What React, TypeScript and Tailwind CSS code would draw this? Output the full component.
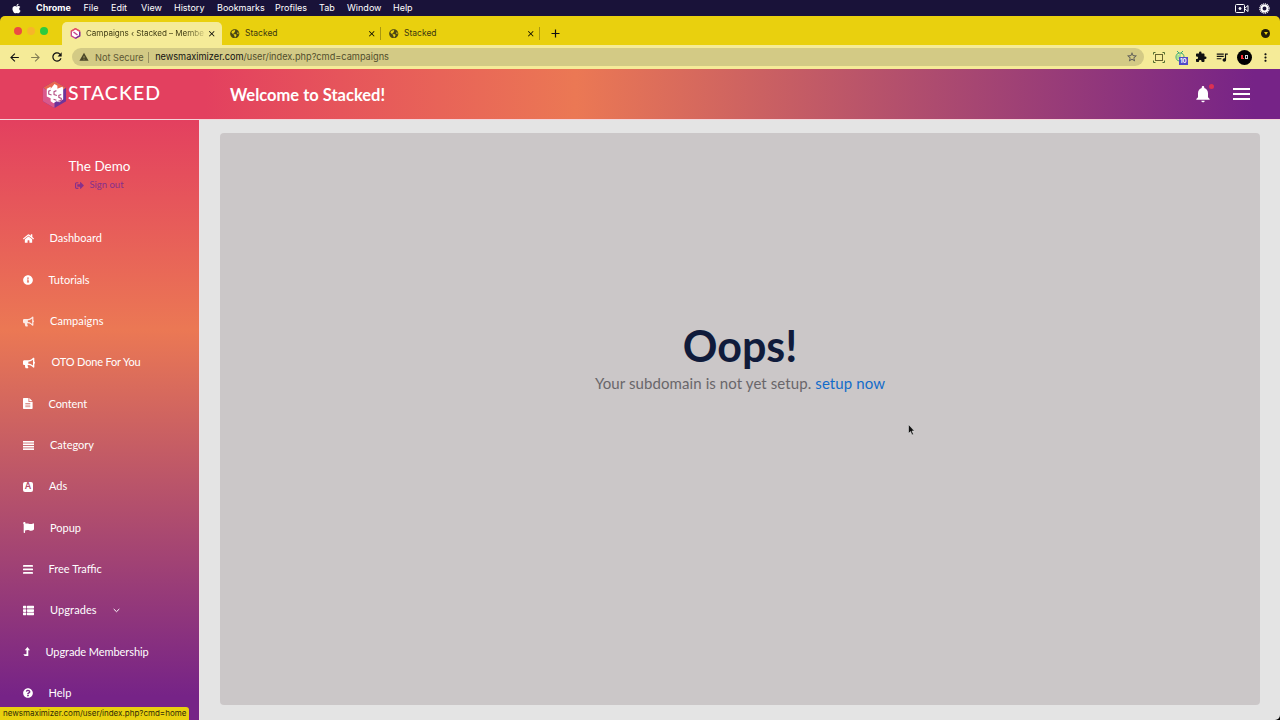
import React from 'react';
import {
  FaApple,
  FaBullhorn,
  FaFlag,
  FaGlobeAmericas,
  FaHome,
  FaInfoCircle,
  FaQuestionCircle,
  FaSignOutAlt,
  FaThList,
} from 'react-icons/fa';
import {
  MdArrowBack,
  MdArrowForward,
  MdClose,
  MdExtension,
  MdMoreVert,
  MdNotifications,
  MdQueueMusic,
  MdRefresh,
  MdStarBorder,
  MdWarning,
} from 'react-icons/md';

const macMenu = [
  { label: 'Chrome', width: 'w-[47.5px] font-bold' },
  { label: 'File', width: 'w-[27.5px]' },
  { label: 'Edit', width: 'w-[30px]' },
  { label: 'View', width: 'w-[33px]' },
  { label: 'History', width: 'w-[43px]' },
  { label: 'Bookmarks', width: 'w-[58px]' },
  { label: 'Profiles', width: 'w-[44px]' },
  { label: 'Tab', width: 'w-[28px]' },
  { label: 'Window', width: 'w-[46px]' },
  { label: 'Help', width: 'w-[30px]' },
];

function BarsIcon() {
  return (
    <svg width="10" height="9" viewBox="0 0 10 9" fill="currentColor">
      <rect width="10" height="1.8" rx=".4" />
      <rect y="3.5" width="10" height="1.8" rx=".4" />
      <rect y="7" width="10" height="1.8" rx=".4" />
    </svg>
  );
}

function JustifyIcon() {
  return (
    <svg width="11" height="9" viewBox="0 0 11 9" fill="currentColor">
      <rect width="11" height="1.6" />
      <rect y="2.45" width="11" height="1.6" />
      <rect y="4.9" width="11" height="1.6" />
      <rect y="7.35" width="11" height="1.6" />
    </svg>
  );
}

function FileIcon() {
  return (
    <svg width="10" height="11" viewBox="0 0 10 11">
      <path d="M.7 0H5.500V4H9.600V10.300Q9.600 11 8.900 11H.7Q0 11 0 10.300V.7Q0 0 .7 0Z" fill="currentColor" />
      <path d="M6.300 0L9.600 3.300H6.300Z" fill="currentColor" />
      <path d="M2.300 5.500h5M2.300 7.100h5M2.300 8.700h5" stroke="#cc6a62" strokeWidth=".7" />
    </svg>
  );
}

function LevelUpIcon() {
  return (
    <svg width="10" height="10" viewBox="0 0 10 10" className="shrink-0">
      <path d="M4.400 0L7 3.300H5.300V8.900H1.700L.3 7.300H3.500V3.300H1.800Z" fill="currentColor" />
    </svg>
  );
}

function AdIcon() {
  return (
    <span className="flex size-[10px] items-center justify-center rounded-[2px] bg-white text-[8.5px] leading-none font-black text-[#b64e6b]">A</span>
  );
}

const navItems = [
  { label: 'Dashboard', icon: <FaHome size={11} />, text: 'ml-[15.5px]' },
  { label: 'Tutorials', icon: <FaInfoCircle size={10} />, text: 'ml-[15.5px]' },
  { label: 'Campaigns', icon: <FaBullhorn size={11} className="opacity-85" />, text: 'ml-[16px] tracking-[.08px]' },
  { label: 'OTO Done For You', icon: <FaBullhorn size={12} />, text: 'ml-[16.5px] tracking-[-.17px]' },
  { label: 'Content', icon: <FileIcon />, text: 'ml-[15.5px] tracking-[-.1px]' },
  { label: 'Category', icon: <JustifyIcon />, text: 'ml-[16px]' },
  { label: 'Ads', icon: <AdIcon />, text: 'ml-[16px]' },
  { label: 'Popup', icon: <FaFlag size={11} />, text: 'ml-[16px]' },
  { label: 'Free Traffic', icon: <BarsIcon />, text: 'ml-[15.5px]' },
  { label: 'Upgrades', icon: <FaThList size={11} />, text: 'ml-[16px] tracking-[.1px]', arrow: true },
  { label: 'Upgrade Membership', icon: <LevelUpIcon />, text: 'ml-[12.5px] tracking-[-.08px]' },
  { label: 'Help', icon: <FaQuestionCircle size={10} />, text: 'ml-[15.5px]' },
];

function CubeIcon({ size }: { size: number }) {
  return (
    <svg width={size} height={size} viewBox="0 0 26 28" className="shrink-0">
      <path d="M13 0L25 7V21L13 28L1 21V7Z" fill="#6f3499" />
      <path d="M13 0L25 7L13 14L1 7Z" fill="#e8654f" />
      <path d="M1 7L13 14V28L1 21Z" fill="#d9588c" />
      <path d="M5 8l4-2v2l4-5 3 2v3l5-2 1 1v12l-4 3-3-1-3 2-3-2v-3l-4-2z" fill="#fff" />
      <path d="M9 9.500L7 10.500v3l3 1M15 10l-2.500 1v3l3 1M20 14l-2.500 1v2l2.500 1v2l-3 1M12 19l3 1" fill="none" stroke="#b65387" strokeWidth="1.200" />
    </svg>
  );
}

function TabIcon() {
  return (
    <svg width="11" height="11" viewBox="0 0 11 11" fill="none" className="shrink-0">
      <path d="M5.500 .7L9.700 3.100V7.900L5.500 10.300L1.300 7.900V3.100Z" fill="#fff" stroke="#c9428a" strokeWidth="1.300" />
      <path d="M1.300 3.100L5.500 .7L9.700 3.100" stroke="#e8545c" strokeWidth="1.300" />
      <path d="M9.700 4V7.900L5.500 10.300" stroke="#74339c" strokeWidth="1.300" />
      <path d="M3.500 4l4 3" stroke="#c9428a" strokeWidth="1.500" />
    </svg>
  );
}

function MenuBar() {
  return (
    <div className="flex h-4 items-center bg-[#191239] text-[9px] text-white">
      <FaApple size={11} className="ml-[11px] mr-[14px]" />
      {macMenu.map((item) => (
        <span key={item.label} className={`${item.width} whitespace-nowrap`}>{item.label}</span>
      ))}
      <div className="ml-auto mr-[10px] flex items-center gap-[10px]">
        <svg width="14" height="9" viewBox="0 0 14 9" fill="none" stroke="#fff">
          <rect x=".5" y=".5" width="9" height="8" rx="1" />
          <path d="M10 4l3-2.500v6L10 5" />
          <circle cx="5" cy="4.500" r="1" fill="#fff" />
        </svg>
        <svg width="11" height="11" viewBox="0 0 11 11" fill="none" stroke="#fff">
          <circle cx="5.500" cy="5.500" r="4.600" strokeWidth="1.400" strokeDasharray="1 .8" />
          <circle cx="5.500" cy="5.500" r="3" strokeWidth="2" />
        </svg>
      </div>
    </div>
  );
}

function InactiveTab() {
  return (
    <div className="flex h-full w-[159px] items-center border-r border-[#a8970f] pl-[8px] pr-[4px]">
      <FaGlobeAmericas size={9.5} className="mr-[5.500px] text-[#4b4716]" />
      <span>Stacked</span>
      <MdClose size={9.5} className="ml-auto text-black" />
    </div>
  );
}

function BrowserTabs() {
  return (
    <div className="bg-[#191239]">
      <div className="flex h-[29px] rounded-t-[5px] bg-[#e9d00e] text-[8.500px] text-[#3b3710]">
        <div className="flex w-[62px] gap-[5px] pl-[14px] pt-[11px]">
          <span className="size-2 rounded-full bg-[#ec4b43]" />
          <span className="size-2 rounded-full bg-[#f7b529]" />
          <span className="size-2 rounded-full bg-[#2dcb3e]" />
        </div>
        <div className="mt-[6px] flex h-[23px] w-[160px] items-center rounded-t-[5px] bg-[#f5eb98] pl-[8px] pr-[6px]">
          <TabIcon />
          <span className="ml-[5px] bg-gradient-to-r from-[#3b3710] from-85% to-[#3b3710]/20 bg-clip-text text-[8.100px] tracking-[-.05px] whitespace-nowrap text-transparent">
            Campaigns ‹ Stacked – Membe
          </span>
          <MdClose size={9.5} className="ml-auto shrink-0 text-black" />
        </div>
        <div className="mt-[11px] flex h-[13px]">
          <InactiveTab />
          <InactiveTab />
          <svg width="9" height="9" viewBox="0 0 9 9" className="ml-[11px] mt-[2px]" stroke="#111" strokeWidth="1.200">
            <path d="M4.500 .5v8M.5 4.500h8" />
          </svg>
        </div>
        <span className="ml-auto mr-[10px] mt-[13px] flex size-[9px] items-center justify-center rounded-full bg-[#211d08]">
          <span className="border-x-2 border-t-[3px] border-x-transparent border-t-[#e9d00e]" />
        </span>
      </div>
    </div>
  );
}

function Toolbar() {
  return (
    <div className="flex h-6 items-center bg-[#f5eb98] pl-[8px] pr-[8px] text-[#111]">
      <MdArrowBack size={13} />
      <MdArrowForward size={13} className="ml-[8px] opacity-50" />
      <MdRefresh size={14} className="ml-[8px]" />
      <div className="ml-[8px] flex h-[18px] w-[1072px] shrink-0 items-center rounded-full bg-[#d3ca85] pl-[7px] pr-[6px] text-[9.200px]">
        <MdWarning size={10} className="text-[#4c4829]" />
        <span className="ml-[6px] border-r border-[#999161] pr-[4px] leading-[11px] text-[#5d5834]">Not Secure</span>
        <span className="ml-[6.500px]">newsmaximizer.com<span className="text-[#514d2c]">/user/index.php?cmd=campaigns</span></span>
        <MdStarBorder size={12} className="ml-auto text-[#555]" />
      </div>
      <svg width="12" height="11" viewBox="0 0 12 11" fill="none" stroke="#4f6b2f" className="ml-[9px]">
        <rect x="2.500" y="2.500" width="7" height="6" stroke="#66632f" />
        <path d="M.5 2.500v-2h2M9.500 .5h2v2M11.500 8.500v2h-2M2.500 10.500h-2v-2" />
      </svg>
      <div className="relative ml-[10px] h-[12px] w-[12px]">
        <svg width="10" height="11" viewBox="0 0 10 11" fill="none" stroke="#38a978">
          <path d="M2 0l2 2M8 0L6 2M5 2C2 2 1 4 1 6s1 4 4 4M5 2c3 0 4 2 4 4" />
          <path d="M3 4v4M5 3v6" stroke="#63d78a" />
        </svg>
        <span className="absolute left-[4px] top-[6px] bg-[#514bc7] px-[1px] text-[6px] leading-[8px] font-bold text-white">10</span>
      </div>
      <MdExtension size={12} className="ml-[8px]" />
      <MdQueueMusic size={14} className="ml-[8px]" />
      <span className="ml-[8px] flex size-[15px] shrink-0 items-center justify-center gap-px rounded-full bg-black">
        <span className="h-[4px] w-[3px] border-b border-l-2 border-red-500" />
        <span className="h-[4px] w-[3px] border border-gray-300" />
      </span>
      <MdMoreVert size={13} className="ml-[7px] shrink-0" />
    </div>
  );
}

function Header() {
  return (
    <header className="flex h-[51px] items-center border-b border-[#f4d5da] bg-[linear-gradient(90deg,#e3405f_0%,#e3405f_16%,#eb7854_45%,#762387_98%)] text-white">
      <div className="flex w-[230px] items-center pl-[41px]">
        <CubeIcon size={27} />
        <span className="mb-[2px] font-[Lato] text-[19.500px] leading-none font-medium tracking-[1.050px]">STACKED</span>
      </div>
      <h1 className="pt-[2px] font-[Lato] text-[16.500px] font-bold">Welcome to Stacked!</h1>
      <div className="relative ml-auto">
        <MdNotifications size={20} />
        <span className="absolute right-[-1px] top-0 size-[5px] rounded-full bg-[#dc3153]" />
      </div>
      <div className="ml-[20px] mr-[30px] flex w-[17px] flex-col gap-[3px]">
        <span className="h-[2px] bg-white" />
        <span className="h-[2px] bg-white" />
        <span className="h-[2px] bg-white" />
      </div>
    </header>
  );
}

function Sidebar() {
  return (
    <aside className="relative w-[200px] border-r border-[#f1dfe5] bg-[linear-gradient(180deg,#e3405f_0%,#eb7854_35%,#762387_96%)] font-[Lato] text-white">
      <div className="flex flex-col items-center pt-[37px]">
        <span className="text-[13.500px] leading-[18px]">The Demo</span>
        <a className="mt-[3px] flex items-center gap-[5px] text-[9.500px] leading-[14px] text-[#87308b]">
          <FaSignOutAlt size={9} /> Sign out
        </a>
      </div>
      <nav className="mt-[26px]">
        {navItems.map((item) => (
          <a key={item.label} className="flex h-[41.330px] items-center pl-[23px] text-[11px]">
            {item.icon}
            <span className={`${item.text} whitespace-nowrap`}>{item.label}</span>
            {item.arrow && (
              <svg width="7" height="5" viewBox="0 0 7 5" fill="none" stroke="currentColor" className="ml-[16px]">
                <path d="M.7 1l2.800 2.700L6.300 1" />
              </svg>
            )}
          </a>
        ))}
      </nav>
      <div className="absolute bottom-0 left-0 h-[13px] w-[189px] rounded-tr-[3px] bg-[#e9d00e] pl-[3px] font-[Inter] text-[8px] leading-[13px] whitespace-nowrap text-[#302b08]">
        newsmaximizer.com/user/index.php?cmd=home
      </div>
    </aside>
  );
}

export default function App() {
  return (
    <div className="bg-black">
      <div className="relative flex h-[720px] w-[1280px] flex-col overflow-hidden rounded-br-[5px] bg-[#e4e4e4] font-[Inter]">
        <MenuBar />
        <BrowserTabs />
        <Toolbar />
        <Header />
        <div className="flex h-[600px]">
          <Sidebar />
          <main className="flex-1 px-5 pt-[13px]">
            <section className="flex h-[572px] flex-col items-center rounded-[4px] bg-[#cbc7c8] pt-[187px] font-[Lato]">
              <h2 className="text-[43px] leading-[52px] font-bold text-[#101b3b]">Oops!</h2>
              <p className="-mt-px text-[15px] leading-[24px] tracking-[.09px] text-[#69666a]">
                Your subdomain is not yet setup. <a className="text-[#126cca]">setup now</a>
              </p>
            </section>
          </main>
        </div>
        {/* Mouse pointer */}
        <svg className="absolute left-[908px] top-[424px]" width="7" height="12" viewBox="0 0 7 12">
          <path d="M.5.500v9l2-2 1.500 3.500 1.500-.700-1.500-3.300h2.500z" fill="#111" stroke="#eee" strokeWidth=".5" />
        </svg>
      </div>
    </div>
  );
}
